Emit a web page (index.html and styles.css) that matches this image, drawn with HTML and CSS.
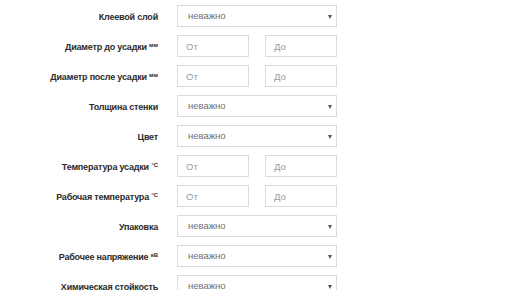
FILE: index.html
```html
<!DOCTYPE html>
<html lang="ru">
<head>
  <meta charset="UTF-8" />
  <title>Фильтр</title>
  <link rel="stylesheet" href="styles.css">
</head>
<body>

<form class="filter">

  <div class="row">
    <label class="label">Клеевой слой</label>
    <div class="select">неважно<span class="arrow"></span></div>
  </div>

  <div class="row">
    <label class="label">Диаметр до усадки <sup>мм</sup></label>
    <div class="range">
      <input class="field" placeholder="От">
      <input class="field" placeholder="До">
    </div>
  </div>

  <div class="row">
    <label class="label">Диаметр после усадки <sup>мм</sup></label>
    <div class="range">
      <input class="field" placeholder="От">
      <input class="field" placeholder="До">
    </div>
  </div>

  <div class="row">
    <label class="label">Толщина стенки</label>
    <div class="select">неважно<span class="arrow"></span></div>
  </div>

  <div class="row">
    <label class="label">Цвет</label>
    <div class="select">неважно<span class="arrow"></span></div>
  </div>

  <div class="row">
    <label class="label">Температура усадки <sup>°C</sup></label>
    <div class="range">
      <input class="field" placeholder="От">
      <input class="field" placeholder="До">
    </div>
  </div>

  <div class="row">
    <label class="label">Рабочая температура <sup>°C</sup></label>
    <div class="range">
      <input class="field" placeholder="От">
      <input class="field" placeholder="До">
    </div>
  </div>

  <div class="row">
    <label class="label">Упаковка</label>
    <div class="select">неважно<span class="arrow"></span></div>
  </div>

  <div class="row">
    <label class="label">Рабочее напряжение <sup>кВ</sup></label>
    <div class="select">неважно<span class="arrow"></span></div>
  </div>

  <div class="row">
    <label class="label">Химическая стойкость</label>
    <div class="select">неважно<span class="arrow"></span></div>
  </div>

</form>

</body>
</html>
```

FILE: styles.css
```css
* {
  margin: 0;
  padding: 0;
  box-sizing: border-box;
}

body {
  font-family: 'Liberation Sans', Arial, sans-serif;
  font-size: 9.5px;
  color: #333;
  background: #fff;
  overflow: hidden;
}

.filter {
  padding-top: 5px;
}

.row {
  display: grid;
  grid-template-columns: 158px 160px;
  column-gap: 19px;
  align-items: center;
  height: 22px;
  margin-bottom: 8px;
}

.label {
  text-align: right;
  font-size: 9px;
  letter-spacing: -0.2px;
  font-weight: bold;
  color: #2b2b2b;
  white-space: nowrap;
  padding-top: 2px;
}

.label sup {
  font-size: 6px;
  font-weight: bold;
  letter-spacing: 0;
  vertical-align: 3px;
}

.select {
  position: relative;
  height: 22px;
  line-height: 20px;
  border: 1px solid #dcdcdc;
  padding-left: 10px;
  color: #6f6f6f;
}

.arrow {
  position: absolute;
  right: 4px;
  top: 9px;
  border-left: 2px solid transparent;
  border-right: 2px solid transparent;
  border-top: 4px solid #555;
}

.range {
  display: flex;
  justify-content: space-between;
}

.field {
  width: 72px;
  height: 22px;
  border: 1px solid #dcdcdc;
  padding-left: 8px;
  font: inherit;
  color: #777;
  outline: none;
}

.field::placeholder {
  color: #999;
}
```
